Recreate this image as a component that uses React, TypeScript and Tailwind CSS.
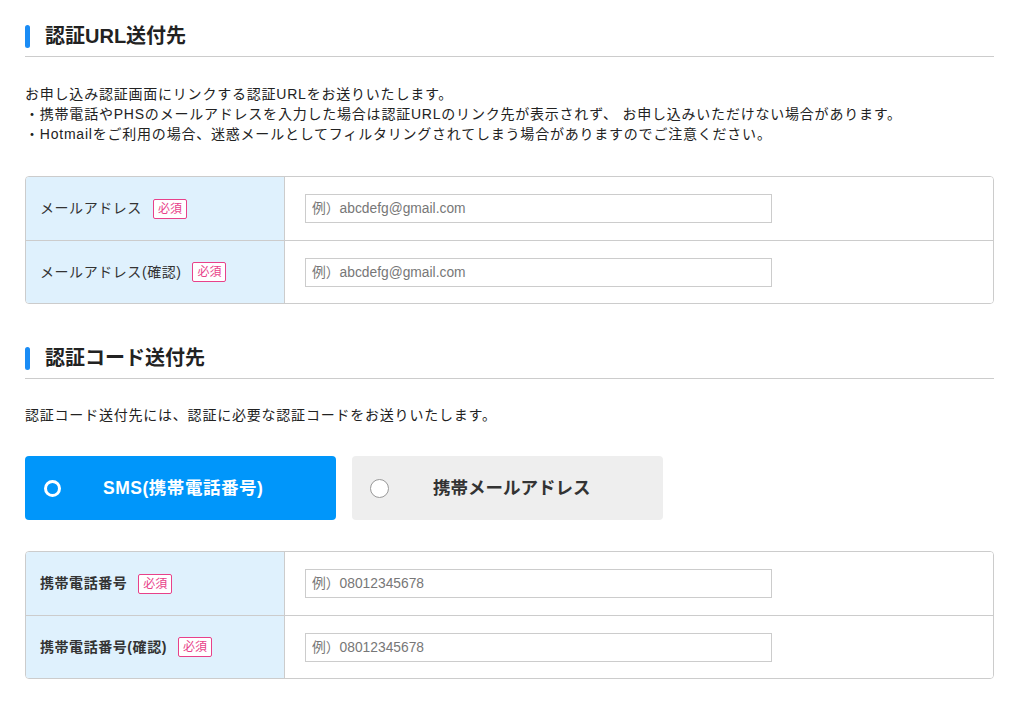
import React from "react";

const FONT = { fontFamily: '"Liberation Sans","Noto Sans CJK JP",sans-serif' };

function Heading({ children }: { children: React.ReactNode }) {
  return (
    <div className="flex h-[30px] items-center box-content pb-[5px] border-b border-[#cccccc]">
      <span className="block h-[23px] w-[5px] rounded-full bg-[#1a8cf5]" />
      <h2 className="ml-[15px] text-[20px] font-bold leading-[30px] text-[#222]">{children}</h2>
    </div>
  );
}

function Badge() {
  return (
    <span className="ml-[11px] inline-flex h-[20px] w-[34px] items-center justify-center rounded-[2px] border border-[#e8418a] bg-white text-[12px] leading-none text-[#e8418a]">
      必須
    </span>
  );
}

function Row({ label, placeholder, bold, first }: { label: string; placeholder: string; bold?: boolean; first?: boolean }) {
  return (
    <div className={`flex h-[63px] ${first ? "" : "border-t border-[#cccccc]"}`}>
      <div className="flex w-[259px] items-center border-r border-[#cccccc] bg-[#dff1fd] pl-[14px]">
        <span className={`text-[14px] tracking-[0.04em] text-[#333] ${bold ? "font-bold" : ""}`}>{label}</span>
        <Badge />
      </div>
      <div className="flex flex-1 items-center bg-white pl-[20px]">
        <input
          readOnly
          placeholder={placeholder}
          className="h-[29px] w-[467px] border border-[#cccccc] bg-white px-[6px] text-[13.8px] text-[#333] placeholder:text-[#777] outline-none"
          style={FONT}
        />
      </div>
    </div>
  );
}

export default function App() {
  return (
    <div className="min-h-[706px] bg-white pl-[25px] pr-[30px] pt-[21px] text-[#333]" style={FONT}>
      <Heading>認証URL送付先</Heading>
      <div className="mt-[27px] text-[14px] leading-[20px] tracking-[0.056em] text-[#222]">
        <p>お申し込み認証画面にリンクする認証URLをお送りいたします。</p>
        <p>・携帯電話やPHSのメールアドレスを入力した場合は認証URLのリンク先が表示されず、 お申し込みいただけない場合があります。</p>
        <p>・Hotmailをご利用の場合、迷惑メールとしてフィルタリングされてしまう場合がありますのでご注意ください。</p>
      </div>
      <div className="mt-[32px] overflow-hidden rounded-[4px] border border-[#cccccc]">
        <Row first label="メールアドレス" placeholder="例）abcdefg@gmail.com" />
        <Row label="メールアドレス(確認)" placeholder="例）abcdefg@gmail.com" />
      </div>

      <div className="mt-[39px]">
        <Heading>認証コード送付先</Heading>
      </div>
      <p className="mt-[26px] text-[14px] leading-[20px] tracking-[0.056em] text-[#222]">
        認証コード送付先には、認証に必要な認証コードをお送りいたします。
      </p>

      <div className="mt-[31px] flex gap-[16px]">
        <div className="flex h-[64px] w-[311px] items-center rounded-[4px] bg-[#0096fa] pl-[19px]">
          <span className="block h-[17px] w-[17px] rounded-full border-[3px] border-white bg-[#0096fa]" />
          <span className="ml-[42px] text-[17.5px] font-bold tracking-[0.03em] text-white">SMS(携帯電話番号)</span>
        </div>
        <div className="flex h-[64px] w-[311px] items-center rounded-[4px] bg-[#eeeeee] pl-[18px]">
          <span className="block h-[19px] w-[19px] rounded-full border border-[#999] bg-white" />
          <span className="ml-[44px] text-[17.5px] font-bold text-[#333]">携帯メールアドレス</span>
        </div>
      </div>

      <div className="mt-[31px] overflow-hidden rounded-[4px] border border-[#cccccc]">
        <Row first bold label="携帯電話番号" placeholder="例）08012345678" />
        <Row bold label="携帯電話番号(確認)" placeholder="例）08012345678" />
      </div>
    </div>
  );
}
